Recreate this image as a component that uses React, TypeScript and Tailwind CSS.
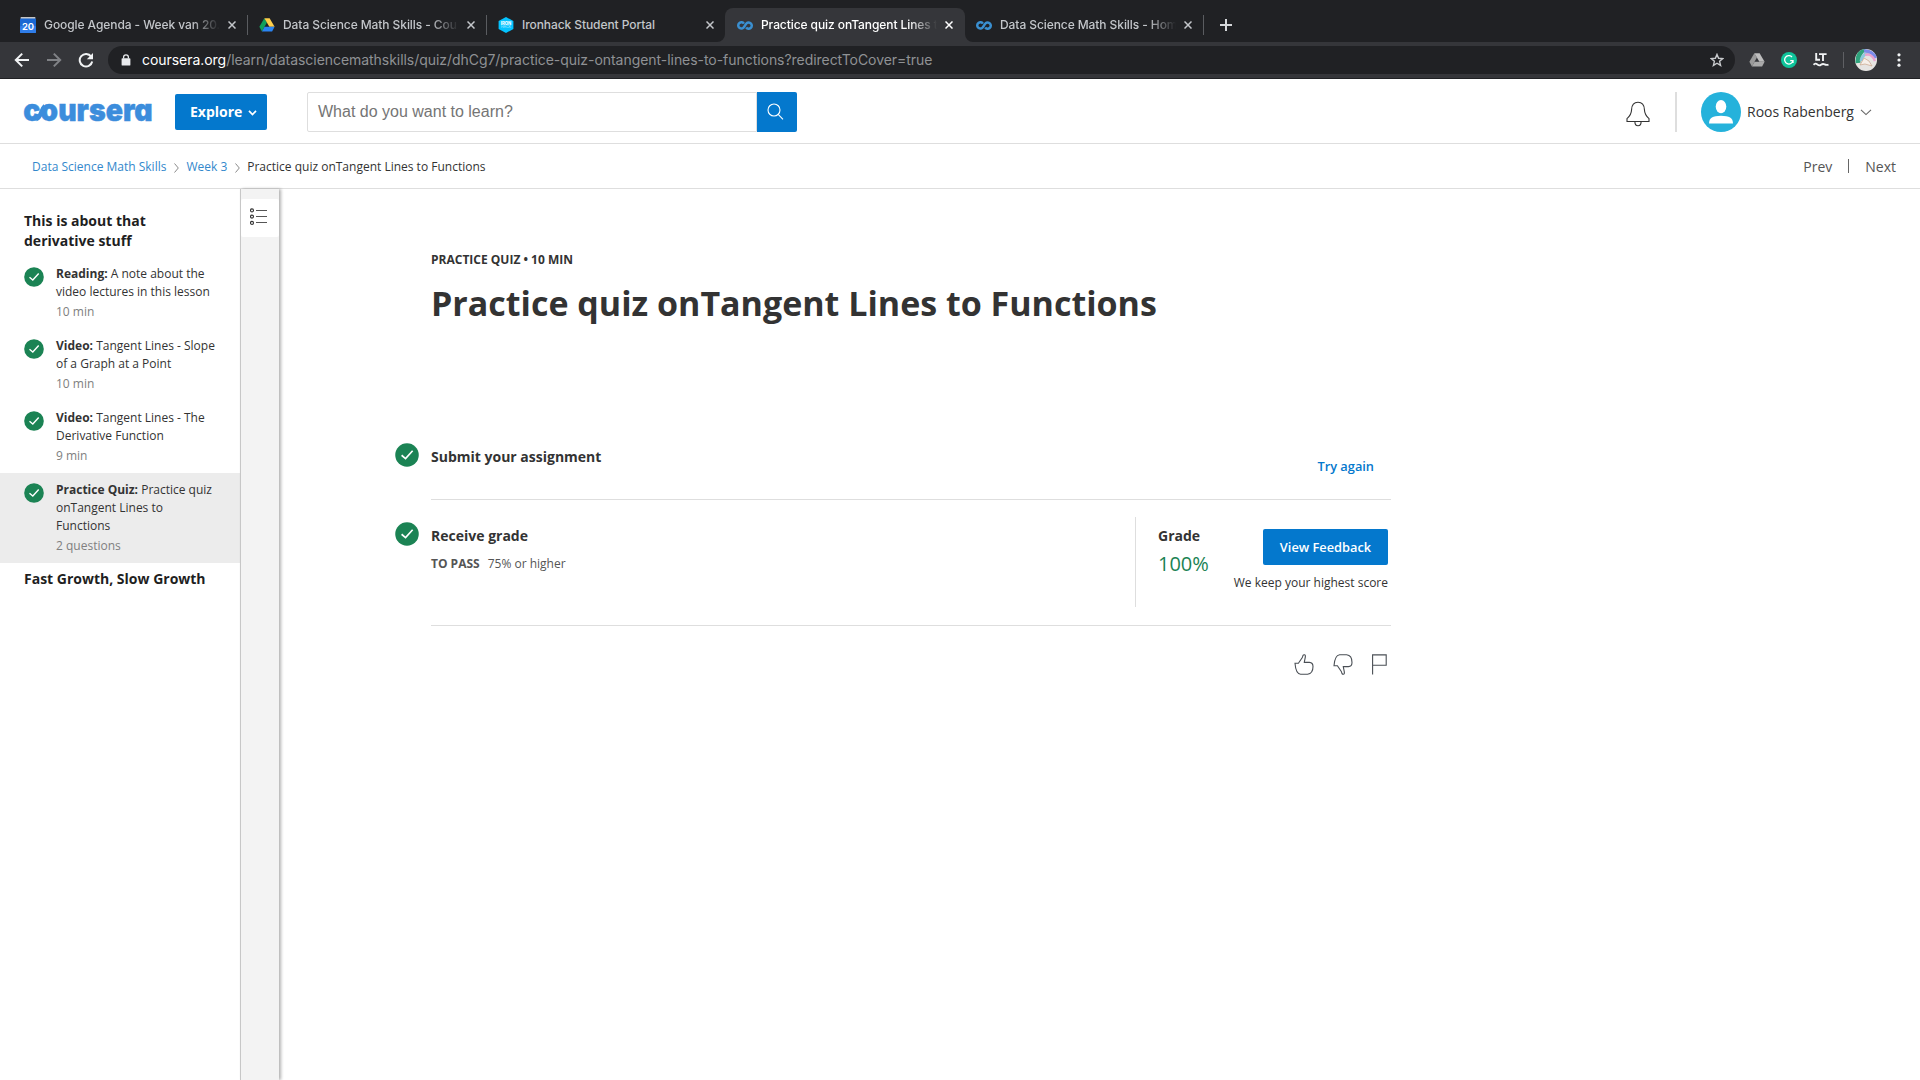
import React from "react";

const INTER = "font-['Inter',sans-serif]";

function CourseraMark() {
  return (
    <svg width="16" height="9" viewBox="0 0 16 9" className="block" fill="none" stroke="#3a8fd0" strokeWidth="2.5">
      <path d="M6.9 2.6A3.1 3.1 0 1 0 6.5 6.6C7.6 5.6 8.3 3.5 9.5 2.4A3.1 3.1 0 1 1 9.2 6.5" />
    </svg>
  );
}

function DriveIcon({ gray = false, size = 16 }: { gray?: boolean; size?: number }) {
  return (
    <svg width={size} height={size} viewBox="0 0 16 16" className="block">
      <path d="M5.3 1.2 0.4 9.8 2.9 14.4 7.9 5.6Z" fill={gray ? "#9a9a9a" : "#11a05b"} />
      <path d="M5.3 1.2H10.6L15.6 9.8H10.4Z" fill={gray ? "#bdbdbd" : "#ffcf4a"} />
      <path d="M5.6 9.8H15.6L13.1 14.4H2.9Z" fill={gray ? "#a9a9a9" : "#2a84f2"} />
    </svg>
  );
}

function Check({ size }: { size: number }) {
  return (
    <svg width={size} height={size} viewBox="0 0 20 20" className="block shrink-0">
      <circle cx="10" cy="10" r="9.8" fill="#1b8354" />
      <path d="M5.5 10.2 8.8 13 14.7 6.5" fill="none" stroke="#fff" strokeWidth="1.4" />
    </svg>
  );
}

function Tab({ icon, title, active = false, sep = true, fade = true }: { icon: React.ReactNode; title: string; active?: boolean; sep?: boolean; fade?: boolean }) {
  return (
    <div className="relative flex h-[34px] w-[239px] shrink-0 items-center pl-3">
      {active && (
        <div className="absolute inset-y-0 -right-px left-0 rounded-t-lg bg-[#35363a]">
          <svg className="absolute bottom-0 -left-2" width="8" height="8"><path d="M8 0V8H0A8 8 0 0 0 8 0" fill="#35363a" /></svg>
          <svg className="absolute -right-2 bottom-0" width="8" height="8"><path d="M0 0V8H8A8 8 0 0 1 0 0" fill="#35363a" /></svg>
        </div>
      )}
      <div className="relative flex w-4 shrink-0 justify-center">{icon}</div>
      <div
        className={
          "relative ml-2 w-[178px] text-[12px] leading-4 font-medium tracking-[-0.08px] whitespace-nowrap " +
          (fade ? "[mask-image:linear-gradient(to_right,black_148px,transparent_176px)] " : "") +
          (active ? "text-white" : "text-[#c3c6ca]")
        }
      >
        {title}
      </div>
      <svg width="8" height="8" viewBox="0 0 8 8" className="relative ml-[6px]" stroke={active ? "#fff" : "#c3c6ca"} strokeWidth="1.5">
        <path d="M0.5 0.5 7.5 7.5M7.5 0.5 0.5 7.5" />
      </svg>
      {sep && <div className="absolute top-[7px] -right-px h-5 w-px bg-[#5a5c60]" />}
    </div>
  );
}

function TabStrip() {
  return (
    <div className="flex h-[42px] items-end bg-[#202124] pl-2">
      <Tab
        title="Google Agenda - Week van 20."
        icon={
          <svg width="16" height="16" viewBox="0 0 16 16">
            <rect x="0.7" y="0" width="14.6" height="3" fill="#c6c6c6" />
            <rect x="0" y="1.6" width="16" height="14.4" rx="0.8" fill="#1967d2" />
            <rect x="0" y="9" width="16" height="7" rx="0.8" fill="#2f7de9" />
            <text x="8" y="12.6" textAnchor="middle" fontSize="9.5" fontWeight="600" fill="#fff" fontFamily="Inter, sans-serif">20</text>
          </svg>
        }
      />
      <Tab title="Data Science Math Skills - Cou" icon={<DriveIcon />} />
      <Tab
        title="Ironhack Student Portal"
        fade={false}
        sep={false}
        icon={
          <svg width="16" height="16" viewBox="0 0 16 16">
            <path d="M8 0 15.4 4V12L8 16 0.6 12V4Z" fill="#04c3ff" />
            <text x="8" y="7.6" textAnchor="middle" fontSize="4.2" fontWeight="800" fill="#fff" fontFamily="Inter, sans-serif">IRON</text>
            <text x="8" y="11.4" textAnchor="middle" fontSize="3.6" fill="#fff" fillOpacity="0.7" fontFamily="Inter, sans-serif">HACK</text>
          </svg>
        }
      />
      <Tab title="Practice quiz onTangent Lines t" active sep={false} icon={<CourseraMark />} />
      <Tab title="Data Science Math Skills - Hom" icon={<CourseraMark />} />
      <svg width="12" height="12" viewBox="0 0 12 12" className="mb-[11px] ml-[17px]" stroke="#d5d7da" strokeWidth="2">
        <path d="M6 0V12M0 6H12" />
      </svg>
    </div>
  );
}

function Toolbar() {
  return (
    <div className="flex h-[37px] items-center border-b border-[#202124] bg-[#35363a] pl-[14px]">
      <svg width="16" height="16" viewBox="0 0 16 16" fill="none" stroke="#f1f3f4" strokeWidth="2">
        <path d="M15 8H2.4M8.2 1.6 1.8 8 8.2 14.4" />
      </svg>
      <svg width="16" height="16" viewBox="0 0 16 16" fill="none" stroke="#808286" strokeWidth="2" className="ml-4">
        <path d="M1 8H13.6M7.8 1.6 14.2 8 7.8 14.4" />
      </svg>
      <svg width="16" height="16" viewBox="0 0 16 16" className="ml-4" fill="none" stroke="#f1f3f4" strokeWidth="2">
        <path d="M13.2 4.6A6.3 6.3 0 1 0 14.2 9.5" />
        <path d="M15 1V7.2H8.8Z" fill="#f1f3f4" stroke="none" />
      </svg>
      <div className="ml-[14px] flex h-7 w-[1627px] shrink-0 items-center rounded-full bg-[#202124] pr-[11px] pl-[13px]">
        <svg width="10" height="12" viewBox="0 0 10 12">
          <rect x="0.6" y="4.2" width="8.8" height="7.4" rx="0.9" fill="#e8eaed" />
          <path d="M2.6 4.6V3.2A2.4 2.4 0 0 1 7.4 3.2V4.6" fill="none" stroke="#e8eaed" strokeWidth="1.3" />
        </svg>
        <div className="ml-[11px] flex-1 text-[14px] leading-5 tracking-[-0.045px] whitespace-nowrap text-[#8f9194]">
          <span className="text-white">coursera.org</span>/learn/datasciencemathskills/quiz/dhCg7/practice-quiz-ontangent-lines-to-functions?redirectToCover=true
        </div>
        <svg width="14" height="14" viewBox="0 0 14 14" fill="none" stroke="#c8cacd" strokeWidth="1.4">
          <path d="M7 1.4 8.6 5.3 12.8 5.6 9.6 8.3 10.6 12.4 7 10.2 3.4 12.4 4.4 8.3 1.2 5.6 5.4 5.3Z" />
        </svg>
      </div>
      <div className="ml-[14px]"><DriveIcon gray /></div>
      <div className="ml-4 flex size-4 items-center justify-center rounded-full bg-[#0fc39a]">
        <svg width="10" height="10" viewBox="0 0 10 10" fill="none" stroke="#fff" strokeWidth="1.3">
          <path d="M8 2A4.2 4.2 0 1 0 9 5.6H6.2M9 5.4V8" />
        </svg>
      </div>
      <svg width="16" height="14" viewBox="0 0 16 14" className="ml-4" fill="none" stroke="#f1f3f4">
        <path d="M3.2 0V6.8H7M6 1.1H13.6M10 1.1V8" strokeWidth="1.9" />
        <path d="M0.5 11.8Q2.4 9.6 4.3 11.4T8 11.8 11.6 11.4 15.5 11.6" strokeWidth="1.8" />
      </svg>
      <div className="ml-[14px] h-4 w-px bg-[#5f6064]" />
      <svg width="22" height="22" viewBox="0 0 22 22" className="ml-[11px]">
        <clipPath id="avatar"><circle cx="11" cy="11" r="11" /></clipPath>
        <g clipPath="url(#avatar)" fill="none">
          <rect width="22" height="22" fill="#e6e4e2" />
          <path d="M3 14C2.4 8 5 2 10 0" stroke="#2fa37c" strokeWidth="5" />
          <path d="M6 12C7 7 10 4 15 4" stroke="#8fc9de" strokeWidth="3" />
          <path d="M9 2C14 1 19 5 21 9" stroke="#7c8bea" strokeWidth="3.4" />
          <path d="M10 6C14 4.5 18 7 20 12" stroke="#e9a3cf" strokeWidth="2.4" />
          <path d="M5 16 9 9 14 12 17 17 10 15Z" fill="#f6efe9" stroke="#c9a58a" strokeWidth="0.7" />
        </g>
      </svg>
      <svg width="4" height="14" viewBox="0 0 4 14" className="ml-5" fill="#f1f3f4">
        <circle cx="2" cy="1.8" r="1.6" /><circle cx="2" cy="7" r="1.6" /><circle cx="2" cy="12.2" r="1.6" />
      </svg>
    </div>
  );
}

function SiteHeader() {
  return (
    <header className="flex h-[65px] items-center border-b border-[#dedede] pt-px pl-6">
      <svg width="128" height="30" viewBox="0 0 128 30" className="shrink-0 overflow-visible">
        <text x="-0.8" y="23.6" fontFamily="Inter, sans-serif" fontWeight="900" fontSize="31" fill="#3c8ddc" stroke="#3c8ddc" strokeWidth="0.5" textLength="129.5" lengthAdjust="spacingAndGlyphs" className="[font-feature-settings:'cv11'_1]">
          coursera
        </text>
        <path d="M12 22.2C17.5 20.5 16.5 13 21 9" stroke="#3c8ddc" strokeWidth="4.5" fill="none" />
      </svg>
      <div className="ml-[23px] flex h-9 w-[92px] shrink-0 items-center rounded-[2px] bg-[#0478cd] pl-[15px] text-[14px] font-bold text-white">
        <span>Explore</span>
        <svg width="9" height="6" viewBox="0 0 9 6" className="mt-[3px] ml-[6px]" fill="none" stroke="#fff" strokeWidth="1.7">
          <path d="M1 0.9 4.5 4.5 8 0.9" />
        </svg>
      </div>
      <div className="ml-10 flex h-10 w-[450px] shrink-0 items-center rounded-l-[2px] border border-[#dedede] pt-px pl-[10px] font-['Liberation_Sans',sans-serif] text-[16px] text-[#757575]">
        What do you want to learn?
      </div>
      <div className="flex size-10 shrink-0 items-center justify-center rounded-r-[2px] bg-[#0478cd] pr-[4px]">
        <svg width="17" height="17" viewBox="0 0 17 17" fill="none" stroke="#fff" strokeWidth="1.1">
          <circle cx="7" cy="7" r="6" /><path d="M11.2 11.4 16 16.4" />
        </svg>
      </div>
      <svg width="24" height="26" viewBox="0 0 24 26" className="mt-[4px] ml-auto" fill="none" stroke="#333" strokeWidth="1.1">
        <path d="M1 20.5V17.6C3.8 15.4 5.4 13.4 5.6 8.6 5.8 4 8.4 1.3 12 1.3S18.2 4 18.4 8.6C18.6 13.4 20.2 15.4 23 17.6V20.5Z" />
        <path d="M8.9 20.7C8.9 26 15.1 26 15.1 20.7" />
      </svg>
      <div className="ml-[25px] h-10 w-[2px] bg-[#dedede]" />
      <svg width="40" height="40" viewBox="0 0 40 40" className="ml-6">
        <circle cx="20" cy="20" r="20" fill="#25b2db" />
        <ellipse cx="20" cy="14.6" rx="5.3" ry="6.6" fill="#fff" />
        <path d="M8 31.6C8.2 25.6 11.6 24.2 20 23.8 28.4 24.2 31.8 25.6 32 31.6Z" fill="#fff" />
      </svg>
      <div className="ml-[6px] w-[108px] text-[14px] whitespace-nowrap text-[#333]">Roos Rabenberg</div>
      <svg width="12" height="7" viewBox="0 0 12 7" className="mt-[2px] mr-12 ml-[5px]" fill="none" stroke="#666" strokeWidth="1.1">
        <path d="M1 0.8 6 5.6 11 0.8" />
      </svg>
    </header>
  );
}

function Crumb() {
  return (
    <svg width="5" height="10" viewBox="0 0 5 10" className="mt-[3px]" fill="none" stroke="#8a8a8a" strokeWidth="1">
      <path d="M0.5 0.5 4.3 5 0.5 9.5" />
    </svg>
  );
}

const items = [
  { kind: "Reading:", lines: ["A note about the", "video lectures in this lesson"], meta: "10 min" },
  { kind: "Video:", lines: ["Tangent Lines - Slope", "of a Graph at a Point"], meta: "10 min" },
  { kind: "Video:", lines: ["Tangent Lines - The", "Derivative Function"], meta: "9 min" },
  { kind: "Practice Quiz:", lines: ["Practice quiz", "onTangent Lines to", "Functions"], meta: "2 questions", selected: true },
];

function Sidebar() {
  return (
    <aside className="w-[240px] shrink-0 pt-[22px]">
      <h2 className="mb-[6px] pl-6 text-[14px] leading-5 font-bold text-[#1f1f1f]">
        This is about that
        <br />
        derivative stuff
      </h2>
      {items.map((it, i) => (
        <div key={i} className={"flex py-2 pl-6 " + (it.selected ? "bg-[#ececec]" : "")}>
          <div className="mt-[2px] mr-3"><Check size={20} /></div>
          <div className="text-[12px] leading-[18px] whitespace-nowrap text-[#333]">
            {it.lines.map((l, j) => (
              <div key={j}>
                {j === 0 && <b>{it.kind} </b>}
                {l}
              </div>
            ))}
            <div className="mt-[2px] text-[#808080]">{it.meta}</div>
          </div>
        </div>
      ))}
      <h2 className="mt-[6px] pl-6 text-[14px] leading-5 font-bold text-[#1f1f1f]">Fast Growth, Slow Growth</h2>
    </aside>
  );
}

function Rail() {
  return (
    <div className="w-[39px] shrink-0 border-l border-[#c7c7c7] bg-[#f3f3f3] pt-[10px] shadow-[2px_0_3px_rgba(0,0,0,0.3)]">
      <div className="h-[38px] rounded-[2px] bg-white pt-[9px] pl-[9px]">
        <svg width="18" height="18" viewBox="0 0 18 18" fill="none" stroke="#333" strokeWidth="1.1">
          <circle cx="2" cy="2.4" r="1.5" /><circle cx="2" cy="8.6" r="1.5" /><circle cx="2" cy="14.9" r="1.5" />
          <path d="M6 2.5H17M6 8.5H17M6 14.5H17" stroke="#555" />
        </svg>
      </div>
    </div>
  );
}

function Quiz() {
  return (
    <main className="ml-[116px] w-[996px] pt-[61px] text-[#333]">
      <div className="pl-9">
        <div className="text-[12px] leading-5 font-bold">PRACTICE QUIZ • 10 MIN</div>
        <h1 className="mt-[9px] text-[34px] leading-[48px] font-bold whitespace-nowrap">Practice quiz onTangent Lines to Functions</h1>
      </div>
      <section className="mt-[116px] flex h-[57px]">
        <div className="w-9"><Check size={24} /></div>
        <div className="flex flex-1 justify-between border-b border-[#dedede]">
          <h3 className="mt-1 text-[14px] leading-5 font-bold">Submit your assignment</h3>
          <a className="mt-[13px] mr-[17px] text-[12.8px] leading-5 font-semibold text-[#0478cd]">Try again</a>
        </div>
      </section>
      <section className="mt-[22px] flex h-[104px]">
        <div className="w-9"><Check size={24} /></div>
        <div className="flex flex-1 border-b border-[#dedede]">
          <div className="w-[704px]">
            <h3 className="mt-1 text-[14px] leading-5 font-bold">Receive grade</h3>
            <div className="mt-2 flex gap-2 text-[12px] leading-5 text-[#555]">
              <b>TO PASS</b>
              <span>75% or higher</span>
            </div>
          </div>
          <div className="-mt-[5px] h-[90px] w-px bg-[#dedede]" />
          <div className="ml-[22px] w-[75px]">
            <h3 className="mt-1 text-[14px] leading-5 font-bold">Grade</h3>
            <div className="mt-[4px] text-[20px] leading-7 text-[#1b8354]">100%</div>
          </div>
          <div className="mr-[3px] flex flex-1 flex-col items-end">
            <button className="mt-[7px] h-9 w-[125px] rounded-[2px] bg-[#0478cd] pt-px text-[12.8px] font-semibold whitespace-nowrap text-white">View Feedback</button>
            <div className="mt-2 text-[12px] leading-5 whitespace-nowrap">We keep your highest score</div>
          </div>
        </div>
      </section>
      <div className="mt-[28px] flex justify-end gap-[19px] pr-[4px]">
        <svg width="20" height="21" viewBox="0 0 20 21" fill="none" stroke="#4a4f55" strokeWidth="1.1">
          <path d="M1 9.2H4.4L8.3 3.6 9 1.4C9.7 0.4 11.4 0.6 11.4 2 11.4 3.8 10.6 6 10.3 8.4H15.4C18.2 8.6 19 10.2 19 12.6 19 17 17.4 19.8 13.6 20.2H6.6C2.6 19.8 1.4 14.4 1 9.2Z" />
        </svg>
        <svg width="20" height="21" viewBox="0 0 20 21" fill="none" stroke="#4a4f55" strokeWidth="1.1">
          <path d="M1 11.8H4.4L8.3 17.4 9 19.6C9.7 20.6 11.4 20.4 11.4 19 11.4 17.2 10.6 15 10.3 12.6H15.4C18.2 12.4 19 10.8 19 8.4 19 4 17.4 1.2 13.6 0.8H6.6C2.6 1.2 1.4 6.6 1 11.8Z" />
        </svg>
        <svg width="15" height="21" viewBox="0 0 15 21" fill="none" stroke="#4a4f55" strokeWidth="1.1">
          <path d="M0.6 20.5V0.9H14.2V11.2H0.6" />
        </svg>
      </div>
    </main>
  );
}

export default function App() {
  return (
    <div className="flex h-[1080px] w-[1920px] flex-col overflow-hidden bg-white font-['Open_Sans',sans-serif]">
      <div className={INTER}>
        <TabStrip />
        <Toolbar />
      </div>
      <SiteHeader />
      <nav className="flex h-[45px] shrink-0 items-center border-b border-[#dedede] pl-8 text-[12px] whitespace-nowrap text-[#333]">
        <span className="pt-px text-[#3388cc]">Data Science Math Skills</span>
        <span className="mr-[7px] ml-2"><Crumb /></span>
        <span className="pt-px text-[#3388cc]">Week 3</span>
        <span className="mr-[7px] ml-2"><Crumb /></span>
        <span className="pt-px">Practice quiz onTangent Lines to Functions</span>
        <div className="mr-6 ml-auto flex items-center text-[14px] text-[#555]">
          <span>Prev</span>
          <span className="mx-4 h-[14px] w-px bg-[#666]" />
          <span>Next</span>
        </div>
      </nav>
      <div className="flex min-h-0 flex-1">
        <Sidebar />
        <Rail />
        <Quiz />
      </div>
    </div>
  );
}
